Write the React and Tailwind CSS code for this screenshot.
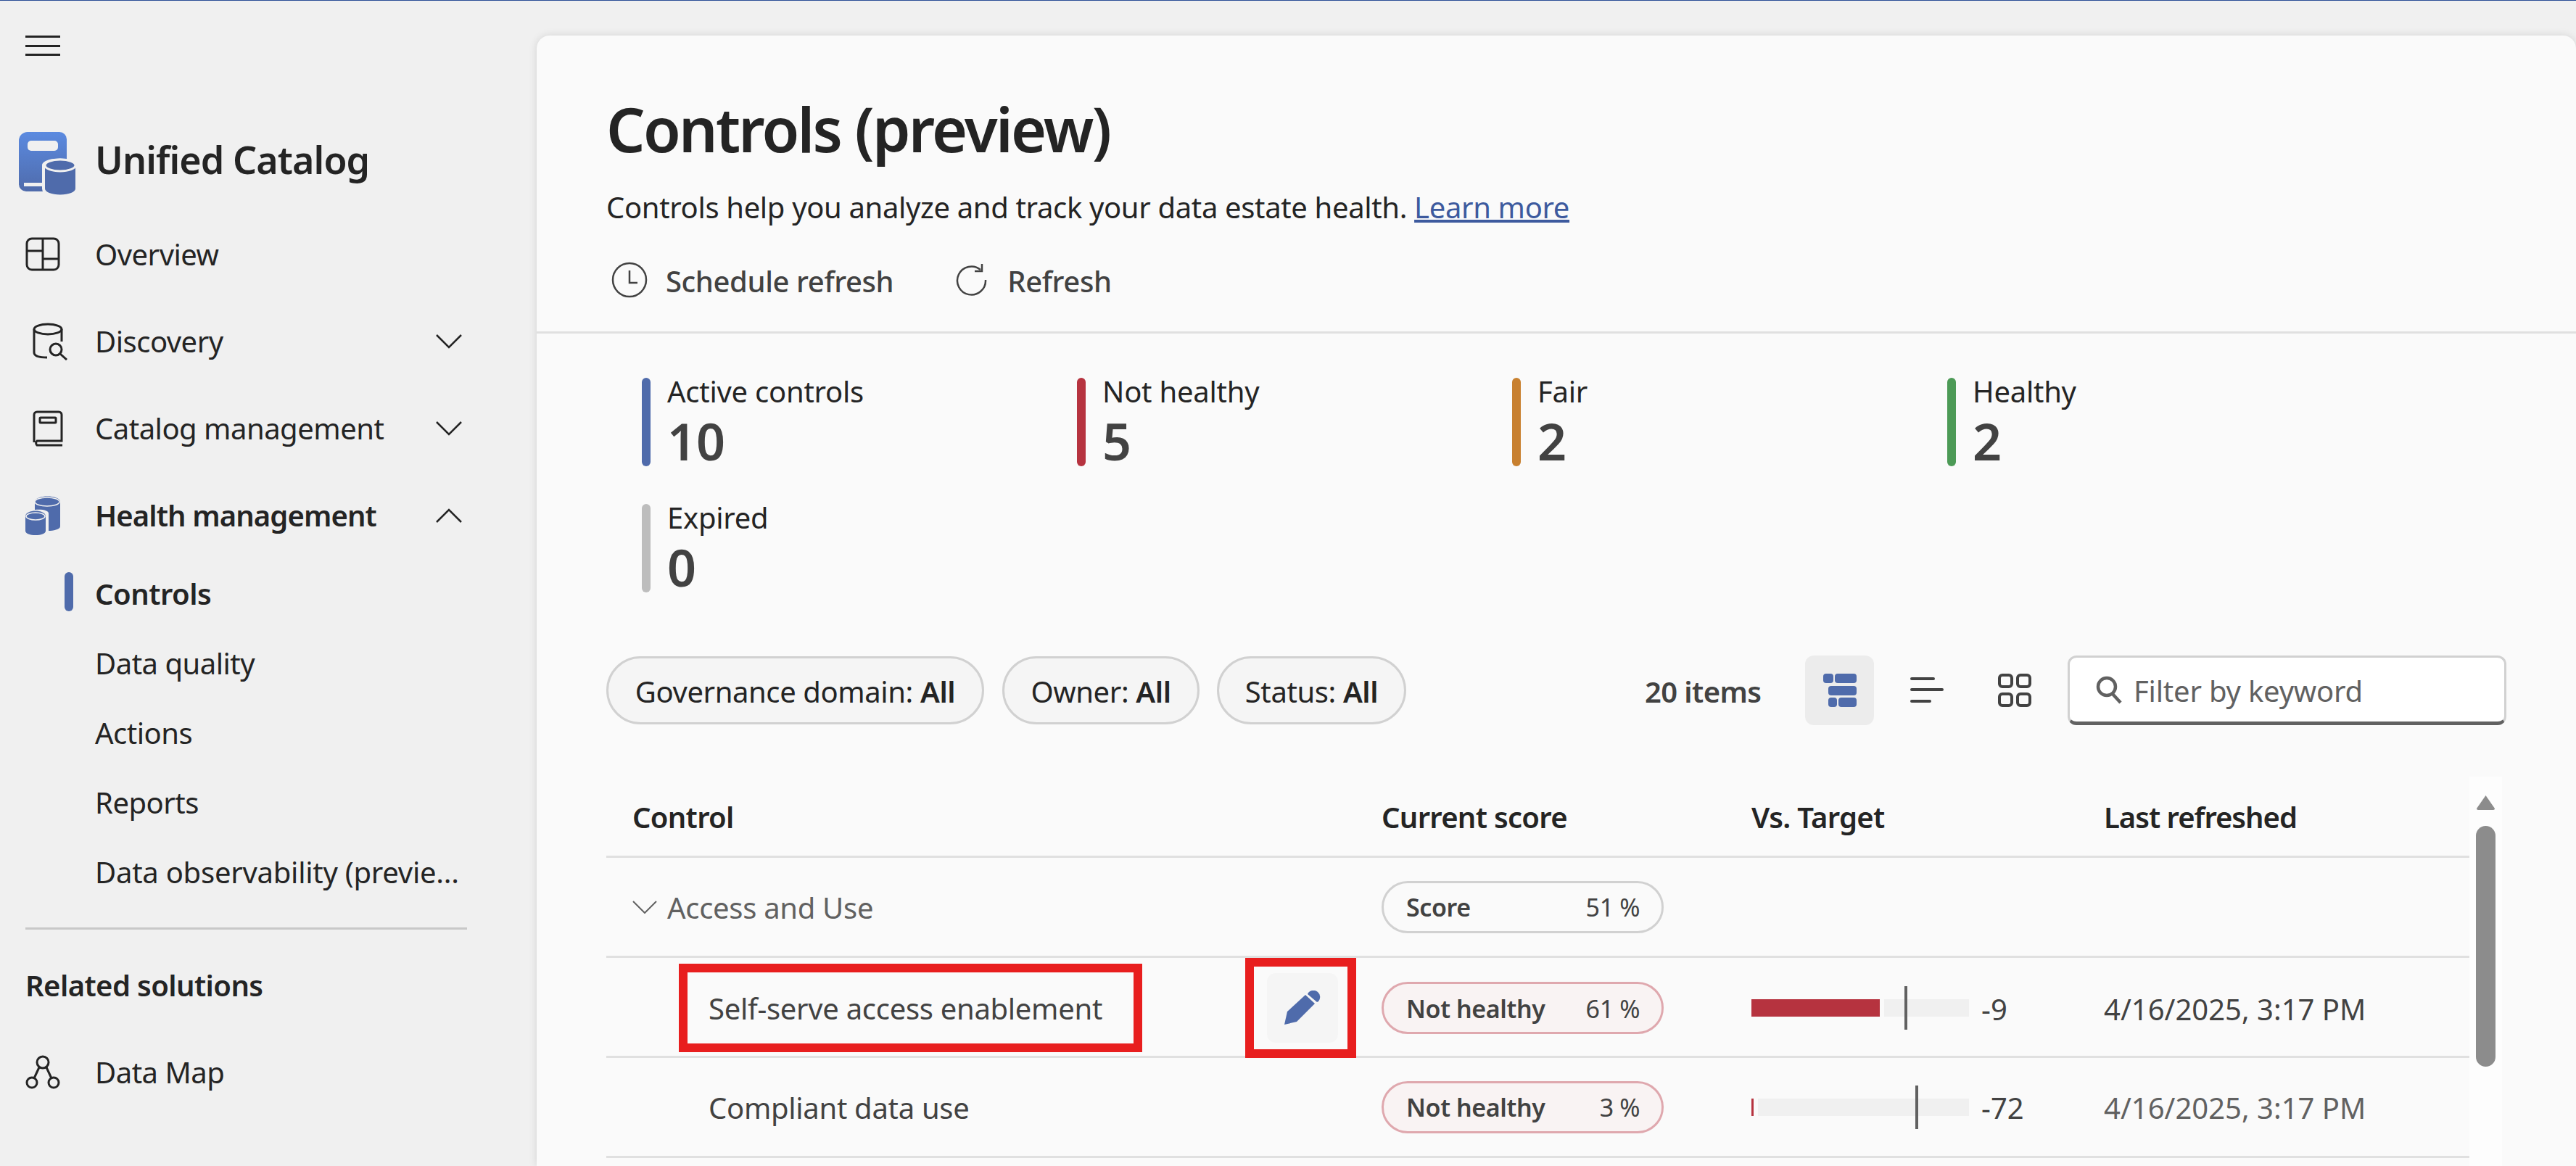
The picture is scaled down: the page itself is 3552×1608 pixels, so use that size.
import React from 'react';

const Chevron = ({ up }) => (
    <svg width="36" height="20" viewBox="0 0 36 20" fill="none" stroke="#242424" strokeWidth="2.5" className="ml-auto mr-[103px]">
        <path d={up ? 'M1 19 L18 2 L35 19' : 'M1 1 L18 18 L35 1'} />
    </svg>
);

const NavRow = ({ icon, label, bold, chevron, up }) => (
    <div className="flex h-[120px] items-center">
        <div className="flex w-[131px] shrink-0 justify-start pl-[35px]">{icon}</div>
        <span className={`text-[40px] text-[#242424] ${bold ? 'font-semibold tracking-[-0.9px]' : 'tracking-[-0.5px]'}`}>{label}</span>
        {chevron && <Chevron up={up} />}
    </div>
);

const SubRow = ({ label, active, loose }) => (
    <div className="relative flex h-[96px] items-center pl-[131px]">
        {active && <div className="absolute left-[89px] top-[18px] h-[54px] w-[12px] rounded-full bg-[#4f6bab]" />}
        <span className={`whitespace-nowrap text-[40px] text-[#242424] ${loose ? 'tracking-[-0.25px]' : 'tracking-[-0.5px]'} ${active ? 'font-semibold' : ''}`}>{label}</span>
    </div>
);

const Logo = () => (
    <svg width="80" height="90" viewBox="0 0 80 90">
        <defs>
            <linearGradient id="lg" x1="0" y1="0" x2="0" y2="1">
                <stop offset="0" stopColor="#5b8ae0" />
                <stop offset="1" stopColor="#4f6bab" />
            </linearGradient>
        </defs>
        <path d="M12 0 H56 a10 10 0 0 1 10 10 V72 a10 10 0 0 1 -10 10 H10 a10 10 0 0 1 -10 -10 V12 a12 12 0 0 1 12 -12Z" fill="url(#lg)" />
        <rect x="12" y="12" width="42" height="14" rx="5" fill="#f0f0f0" />
        <path d="M7 70 H36 V75 H7Z" fill="#f0f0f0" />
        <path d="M34 46 C34 36 80 36 80 46 V78 C80 92 34 92 34 78Z" fill="#4f6bab" stroke="#f0f0f0" strokeWidth="4" />
        <ellipse cx="57" cy="46" rx="21" ry="8" fill="#4f6bab" stroke="#f0f0f0" strokeWidth="3" />
    </svg>
);

const OverviewIcon = () => (
    <svg width="48" height="48" viewBox="0 0 48 48" fill="none" stroke="#242424" strokeWidth="3">
        <rect x="2" y="2" width="44" height="43" rx="7" />
        <path d="M24 2 V45 M2 19 H24 M24 30 H46" />
    </svg>
);

const DiscoveryIcon = () => (
    <svg width="48" height="52" viewBox="0 0 48 52" fill="none" stroke="#242424" strokeWidth="3" className="ml-[10px]">
        <ellipse cx="21" cy="9" rx="19" ry="7" />
        <path d="M2 9 V41 C2 46 10 48 20 48 M40 9 V26" />
        <circle cx="32" cy="37" r="8" />
        <path d="M38 43 L47 51" />
    </svg>
);

const CatalogIcon = () => (
    <svg width="42" height="50" viewBox="0 0 42 50" fill="none" stroke="#242424" strokeWidth="3" className="ml-[10px]">
        <path d="M2 44 V6 a4 4 0 0 1 4 -4 H36 a4 4 0 0 1 4 4 V42 H6 a4 4 0 0 0 0 6 H41" />
        <rect x="10" y="10" width="22" height="7" rx="1" />
    </svg>
);

const HealthIcon = () => (
    <svg width="48" height="54" viewBox="0 0 48 54" fill="#4f6bab">
        <path d="M13 8 C13 -2 48 -2 48 8 V42 C48 46 38 48 32 48 V24 C32 20 24 18 13 19Z" />
        <ellipse cx="30" cy="8" rx="17" ry="6" stroke="#f0f0f0" strokeWidth="1.5" />
        <path d="M0 28 C0 18 28 18 28 28 V48 C28 56 0 56 0 48Z" />
        <ellipse cx="14" cy="28" rx="13" ry="5" stroke="#f0f0f0" strokeWidth="1.5" />
    </svg>
);

const DataMapIcon = () => (
    <svg width="48" height="48" viewBox="0 0 48 48" fill="none" stroke="#242424" strokeWidth="3">
        <circle cx="24" cy="10" r="8" />
        <circle cx="9" cy="38" r="7" />
        <circle cx="39" cy="38" r="7" />
        <path d="M19 17 L12 32 M29 17 L36 32" />
    </svg>
);

const ClockIcon = () => (
    <svg width="50" height="50" viewBox="0 0 50 50" fill="none" stroke="#424242" strokeWidth="2.5">
        <circle cx="25" cy="25" r="23" />
        <path d="M25 12 V29 H36" />
    </svg>
);

const RefreshIcon = () => (
    <svg width="44" height="44" viewBox="0 0 44 44" fill="none" stroke="#424242" strokeWidth="2.5">
        <path d="M34 8 A19.5 19.5 0 1 0 41 22" />
        <path d="M36 0 V10 H26" />
    </svg>
);

const Stat = ({ color, label, value }) => (
    <div className="flex h-[122px] gap-[23px]">
        <div className={`h-full w-[12px] rounded-full ${color}`} />
        <div className="flex flex-col">
            <span className="text-[40px] leading-[38px] tracking-[-0.25px] text-[#242424]">{label}</span>
            <span className="mt-[12px] text-[70px] font-semibold leading-[74px] text-[#424242]">{value}</span>
        </div>
    </div>
);

const Filter = ({ label, width }) => (
    <div className={`flex h-[94px] items-center justify-center rounded-full border-[3px] border-[#d1d1d1] bg-[#f5f5f5] pt-[3px] text-[40px] tracking-[-0.4px] text-[#242424] ${width}`}>
        {label}:&nbsp;<span className="font-semibold">All</span>
    </div>
);

const ScorePill = ({ label, value, red }) => (
    <div className={`flex h-[72px] w-[389px] items-center justify-between rounded-full border-[3px] pl-[31px] pr-[30px] pt-[2px] text-[34px] tracking-[-0.4px] text-[#424242] ${red ? 'border-[#dfa8ae] bg-[#f9f3f3]' : 'border-[#d1d1d1] bg-[#fafafa]'}`}>
        <span className="font-semibold">{label}</span>
        <span>{value}</span>
    </div>
);

const TargetBar = ({ fill, tick, value }) => (
    <div className="flex items-center">
        <div className="relative h-[24px] w-[300px] bg-[#f0f0f0]">
            <div className="absolute inset-y-0 left-0 border-r-[6px] border-[#fafafa] bg-[#b6333f]" style={{ width: fill }} />
            <div className="absolute -top-[18px] h-[60px] w-[4px] bg-[#616161]" style={{ left: tick }} />
        </div>
        <span className="ml-[17px] pt-[3px] text-[40px] text-[#424242]">{value}</span>
    </div>
);

const cols = 'grid grid-cols-[1069px_510px_486px_1fr] items-center';

export default function App() {
    return (
        <div className="flex h-[1608px] w-[3552px] overflow-hidden border-t border-[#2a4d96] bg-[#f0f0f0] font-['Noto_Sans',sans-serif]">
            <aside className="w-[740px] shrink-0">
                <div className="ml-[35px] mt-[48px] flex h-[28px] w-[48px] flex-col justify-between">
                    <div className="h-[3px] bg-[#242424]" />
                    <div className="h-[3px] bg-[#242424]" />
                    <div className="h-[3px] bg-[#242424]" />
                </div>
                <div className="ml-[26px] mt-[105px] flex h-[90px] items-center">
                    <Logo />
                    <span className="mb-[14px] ml-[25px] text-[52px] font-semibold tracking-[-0.9px] text-[#242424]">Unified Catalog</span>
                </div>
                <div className="mt-[19px]">
                    <NavRow icon={<OverviewIcon />} label="Overview" />
                    <NavRow icon={<DiscoveryIcon />} label="Discovery" chevron />
                    <NavRow icon={<CatalogIcon />} label="Catalog management" chevron />
                    <NavRow icon={<HealthIcon />} label="Health management" bold chevron up />
                </div>
                <SubRow label="Controls" active />
                <SubRow label="Data quality" />
                <SubRow label="Actions" />
                <SubRow label="Reports" />
                <SubRow label="Data observability (previe..." loose />
                <div className="ml-[35px] mt-[28px] h-[3px] w-[609px] bg-[#c8c8c8]" />
                <div className="ml-[35px] mt-[41px] flex h-[72px] items-center text-[40px] font-semibold tracking-[-0.6px] text-[#242424]">Related solutions</div>
                <div className="mt-[24px]">
                    <NavRow icon={<DataMapIcon />} label="Data Map" />
                </div>
            </aside>

            <main className="mt-[48px] min-w-0 flex-1 rounded-t-[18px] bg-[#fafafa] shadow-[0_0_12px_rgba(0,0,0,0.12)]">
                <div className="pl-[96px] pt-[73px]">
                    <h1 className="text-[84px] font-semibold leading-[112px] tracking-[-2.7px] text-[#242424]">Controls (preview)</h1>
                    <p className="mt-[24px] text-[40px] leading-[56px] tracking-[-0.35px] text-[#242424]">
                        Controls help you analyze and track your data estate health. <span className="text-[#3d5a9e] underline">Learn more</span>
                    </p>
                    <div className="mt-[36px] flex h-[72px] items-center text-[40px] font-medium tracking-[-0.4px] text-[#424242]">
                        <div className="ml-[7px]"><ClockIcon /></div>
                        <span className="ml-[25px] pt-[3px]">Schedule refresh</span>
                        <div className="ml-[86px]"><RefreshIcon /></div>
                        <span className="ml-[27px] pt-[3px]">Refresh</span>
                    </div>
                </div>
                <div className="mt-[35px] h-[3px] bg-[#e0e0e0]" />

                <div className="ml-[145px] mt-[61px] grid grid-cols-[600px_600px_600px_600px] gap-y-[52px]">
                    <Stat color="bg-[#4f6bab]" label="Active controls" value="10" />
                    <Stat color="bg-[#b6333f]" label="Not healthy" value="5" />
                    <Stat color="bg-[#c8802f]" label="Fair" value="2" />
                    <Stat color="bg-[#4c9a56]" label="Healthy" value="2" />
                    <Stat color="bg-[#bdbdbd]" label="Expired" value="0" />
                </div>

                <div className="ml-[96px] mt-[87px] flex h-[96px] items-center">
                    <Filter label="Governance domain" width="w-[521px]" />
                    <div className="ml-[25px]"><Filter label="Owner" width="w-[272px]" /></div>
                    <div className="ml-[24px]"><Filter label="Status" width="w-[261px]" /></div>
                    <span className="ml-[329px] w-[221px] pt-[3px] text-[40px] font-semibold tracking-[-0.6px] text-[#424242]">20 items</span>
                    <div className="flex h-[96px] w-[95px] items-center justify-center rounded-[12px] bg-[#ececec]">
                        <svg width="46" height="46" viewBox="0 0 46 46" fill="#4f6bab">
                            <rect x="0" y="0" width="14" height="13" rx="4" />
                            <rect x="16" y="0" width="30" height="13" rx="4" />
                            <rect x="7" y="17" width="39" height="13" rx="4" />
                            <rect x="7" y="33" width="12" height="13" rx="4" />
                            <rect x="21" y="33" width="25" height="13" rx="4" />
                        </svg>
                    </div>
                    <div className="ml-[50px]">
                        <svg width="46" height="36" viewBox="0 0 46 36" fill="#424242">
                            <rect x="0" y="0" width="34" height="4" rx="2" />
                            <rect x="0" y="15" width="46" height="4" rx="2" />
                            <rect x="0" y="31" width="29" height="4" rx="2" />
                        </svg>
                    </div>
                    <div className="ml-[75px]">
                        <svg width="46" height="46" viewBox="0 0 46 46" fill="none" stroke="#424242" strokeWidth="4">
                            <rect x="2" y="2" width="17" height="16" rx="4" />
                            <rect x="27" y="2" width="17" height="16" rx="4" />
                            <rect x="2" y="28" width="17" height="16" rx="4" />
                            <rect x="27" y="28" width="17" height="16" rx="4" />
                        </svg>
                    </div>
                    <div className="ml-[50px] flex h-[96px] w-[605px] items-center rounded-[12px] border-[3px] border-b-[5px] border-[#d1d1d1] border-b-[#616161] bg-white pl-[35px]">
                        <svg width="38" height="40" viewBox="0 0 38 40" fill="none" stroke="#616161" strokeWidth="4.5">
                            <circle cx="16" cy="16" r="12" />
                            <path d="M24 26 L35 38" />
                        </svg>
                        <span className="ml-[15px] pt-[3px] text-[40px] tracking-[-0.2px] text-[#616161]">Filter by keyword</span>
                    </div>
                </div>

                <div className="ml-[96px] mt-[71px] flex">
                    <div className="w-[2569px] shrink-0">
                        <div className={`${cols} h-[112px] border-b-[3px] border-[#e0e0e0] pt-[3px] text-[40px] font-semibold tracking-[-0.7px] text-[#242424]`}>
                            <span className="pl-[36px]">Control</span>
                            <span>Current score</span>
                            <span>Vs. Target</span>
                            <span className="tracking-[-1px]">Last refreshed</span>
                        </div>
                        <div className={`${cols} h-[138px] border-b-[3px] border-[#e0e0e0]`}>
                            <div className="flex items-center pl-[36px] text-[40px] tracking-[-0.3px] text-[#616161]">
                                <svg width="34" height="18" viewBox="0 0 34 18" fill="none" stroke="#616161" strokeWidth="2">
                                    <path d="M1 1 L17 17 L33 1" />
                                </svg>
                                <span className="ml-[14px] pt-[3px]">Access and Use</span>
                            </div>
                            <ScorePill label="Score" value="51 %" />
                        </div>
                        <div className={`${cols} h-[138px] border-b-[3px] border-[#e0e0e0]`}>
                            <div className="flex items-center pl-[100px]">
                                <div className="flex h-[122px] w-[639px] items-center border-[12px] border-[#e81e1e] pl-[29px] pt-[1px] text-[40px] tracking-[-0.3px] text-[#424242]">
                                    Self-serve access enablement
                                </div>
                                <div className="relative z-10 ml-[142px] flex h-[138px] w-[153px] items-center border-[12px] border-[#e81e1e] pl-[18px]">
                                    <div className="flex h-[96px] w-[98px] items-center justify-center rounded-[12px] bg-[#f5f5f5]">
                                        <svg width="52" height="48" viewBox="0 0 52 48" fill="#4f6bab">
                                            <path d="M1 47 L5 29 L30 6 L43 18 L18 43Z" />
                                            <path d="M34 3 a9 9 0 0 1 14 12 l-2 1 L33 5Z" />
                                        </svg>
                                    </div>
                                </div>
                            </div>
                            <ScorePill label="Not healthy" value="61 %" red />
                            <TargetBar fill={183} tick={211} value="-9" />
                            <span className="pt-[3px] text-[40px] tracking-[0px] text-[#424242]">4/16/2025, 3:17 PM</span>
                        </div>
                        <div className={`${cols} h-[138px] border-b-[3px] border-[#e0e0e0]`}>
                            <div className="pl-[141px] pt-[3px] text-[40px] tracking-[-0.3px] text-[#424242]">Compliant data use</div>
                            <ScorePill label="Not healthy" value="3 %" red />
                            <TargetBar fill={9} tick={226} value="-72" />
                            <span className="pt-[3px] text-[40px] tracking-[0px] text-[#616161]">4/16/2025, 3:17 PM</span>
                        </div>
                    </div>
                    <div className="flex h-[540px] w-[45px] shrink-0 flex-col items-start bg-[#fdfdfd] pl-[9px] pt-[25px]">
                        <svg width="27" height="21" viewBox="0 0 27 21" fill="#8c8c8c">
                            <path d="M13.5 1 L26 19 Q26 21 24 21 H3 Q1 21 1 19Z" />
                        </svg>
                        <div className="mt-[22px] h-[332px] w-[27px] shrink-0 rounded-full bg-[#8c8c8c]" />
                    </div>
                </div>
            </main>
        </div>
    );
}
